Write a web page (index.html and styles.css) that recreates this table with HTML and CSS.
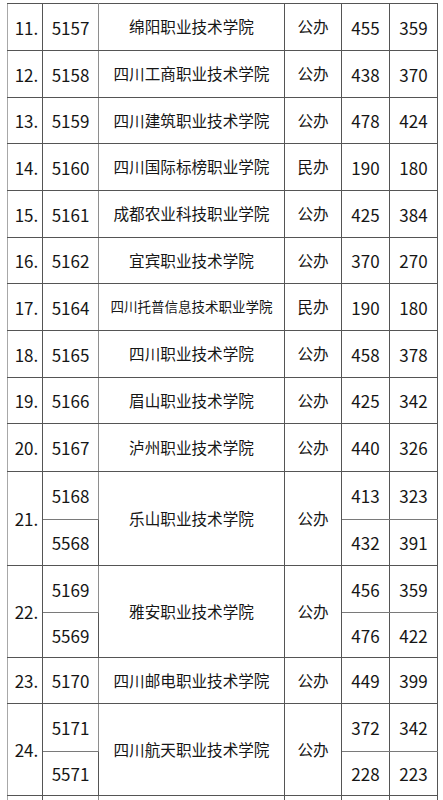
FILE: index.html
```html
<!DOCTYPE html>
<html lang="zh-CN">
<head>
<meta charset="utf-8">
<title>院校分数线</title>
<link rel="stylesheet" href="styles.css">
</head>
<body>
<table class="scores">
  <colgroup>
    <col class="c-no">
    <col class="c-code">
    <col class="c-name">
    <col class="c-type">
    <col class="c-s1">
    <col class="c-s2">
  </colgroup>
  <tbody>
    <tr class="r47"><td class="no">11.</td><td class="code">5157</td><td class="name">绵阳职业技术学院</td><td class="type">公办</td><td>455</td><td>359</td></tr>
    <tr class="r47"><td class="no">12.</td><td class="code">5158</td><td class="name">四川工商职业技术学院</td><td class="type">公办</td><td>438</td><td>370</td></tr>
    <tr class="r46"><td class="no">13.</td><td class="code">5159</td><td class="name">四川建筑职业技术学院</td><td class="type">公办</td><td>478</td><td>424</td></tr>
    <tr class="r47"><td class="no">14.</td><td class="code">5160</td><td class="name">四川国际标榜职业学院</td><td class="type">民办</td><td>190</td><td>180</td></tr>
    <tr class="r47"><td class="no">15.</td><td class="code">5161</td><td class="name">成都农业科技职业学院</td><td class="type">公办</td><td>425</td><td>384</td></tr>
    <tr class="r46"><td class="no">16.</td><td class="code">5162</td><td class="name">宜宾职业技术学院</td><td class="type">公办</td><td>370</td><td>270</td></tr>
    <tr class="r47"><td class="no">17.</td><td class="code">5164</td><td class="name small">四川托普信息技术职业学院</td><td class="type">民办</td><td>190</td><td>180</td></tr>
    <tr class="r47"><td class="no">18.</td><td class="code">5165</td><td class="name">四川职业技术学院</td><td class="type">公办</td><td>458</td><td>378</td></tr>
    <tr class="r46"><td class="no">19.</td><td class="code">5166</td><td class="name">眉山职业技术学院</td><td class="type">公办</td><td>425</td><td>342</td></tr>
    <tr class="r48"><td class="no">20.</td><td class="code">5167</td><td class="name">泸州职业技术学院</td><td class="type">公办</td><td>440</td><td>326</td></tr>
    <tr class="r48 split-top"><td class="no" rowspan="2">21.</td><td class="code">5168</td><td class="name" rowspan="2">乐山职业技术学院</td><td class="type" rowspan="2">公办</td><td>413</td><td>323</td></tr>
    <tr class="r46 split-bottom"><td class="code">5568</td><td>432</td><td>391</td></tr>
    <tr class="r47 split-top"><td class="no" rowspan="2">22.</td><td class="code">5169</td><td class="name" rowspan="2">雅安职业技术学院</td><td class="type" rowspan="2">公办</td><td>456</td><td>359</td></tr>
    <tr class="r45 split-bottom"><td class="code">5569</td><td>476</td><td>422</td></tr>
    <tr class="r46"><td class="no">23.</td><td class="code">5170</td><td class="name">四川邮电职业技术学院</td><td class="type">公办</td><td>449</td><td>399</td></tr>
    <tr class="r48 split-top"><td class="no" rowspan="2">24.</td><td class="code">5171</td><td class="name" rowspan="2">四川航天职业技术学院</td><td class="type" rowspan="2">公办</td><td>372</td><td>342</td></tr>
    <tr class="r44 split-bottom"><td class="code">5571</td><td>228</td><td>223</td></tr>
    <tr class="r47"><td class="no"></td><td class="code"></td><td class="name"></td><td class="type"></td><td></td><td></td></tr>
  </tbody>
</table>
</body>
</html>
```

FILE: styles.css
```css
html, body {
  margin: 0;
  padding: 0;
  background: #ffffff;
}

body {
  padding: 3px 0 0 7px;
  font-family: "Noto Sans CJK SC", "Noto Sans", sans-serif;
  color: #161616;
  overflow: hidden;
}

.scores {
  border-collapse: collapse;
  table-layout: fixed;
  width: 431px;
  font-size: 17px;
  line-height: 1;
}

.c-no { width: 35px; }
.c-code { width: 56px; }
.c-name { width: 186px; }
.c-type { width: 57px; }
.c-s1 { width: 48px; }
.c-s2 { width: 48px; }

.scores td {
  border: 1px solid #555555;
  padding: 0;
  text-align: center;
  vertical-align: middle;
  white-space: nowrap;
  overflow: hidden;
}

.scores td.no {
  border-left-color: #a8a8a8;
  padding-left: 3px;
}

.scores td.code {
  border-right-color: #8e8e8e;
}

.scores td.name,
.scores td.type {
  font-size: 15.6px;
}

.scores tr.split-top td.code,
.scores tr.split-top td:nth-last-child(-n+2) {
  border-bottom-color: #7a7a7a;
}

.scores td.small {
  font-size: 13.5px;
}

.r44 { height: 44px; }
.r45 { height: 45px; }
.r46 { height: 46px; }
.r47 { height: 47px; }
.r48 { height: 48px; }
```
